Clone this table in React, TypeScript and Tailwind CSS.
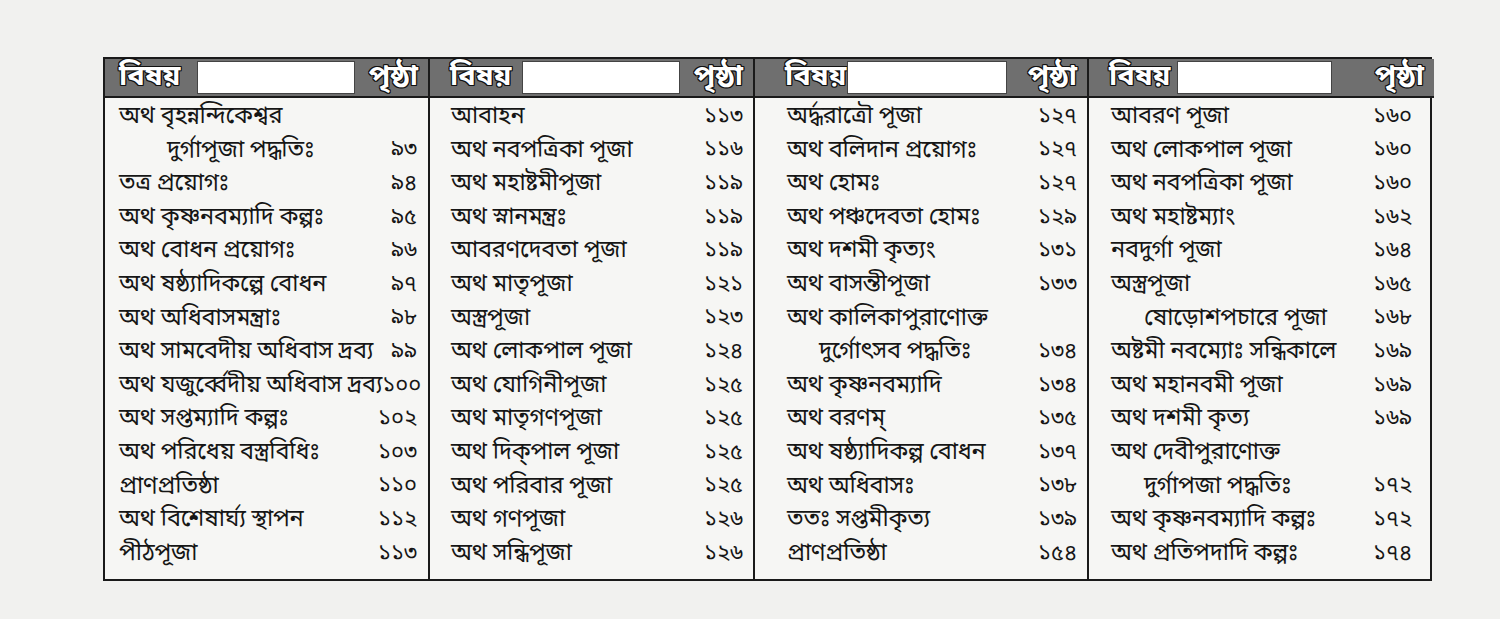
import React from "react";

type Row = { t: string; p?: string; indent?: boolean };

const col1: Row[] = [
  { t: "অথ বৃহন্নন্দিকেশ্বর" },
  { t: "দুর্গাপূজা পদ্ধতিঃ", p: "৯৩", indent: true },
  { t: "তত্র প্রয়োগঃ", p: "৯৪" },
  { t: "অথ কৃষ্ণনবম্যাদি কল্পঃ", p: "৯৫" },
  { t: "অথ বোধন প্রয়োগঃ", p: "৯৬" },
  { t: "অথ ষষ্ঠ্যাদিকল্পে বোধন", p: "৯৭" },
  { t: "অথ অধিবাসমন্ত্রাঃ", p: "৯৮" },
  { t: "অথ সামবেদীয় অধিবাস দ্রব্য", p: "৯৯" },
  { t: "অথ যজুর্ব্বেদীয় অধিবাস দ্রব্য", p: "১০০" },
  { t: "অথ সপ্তম্যাদি কল্পঃ", p: "১০২" },
  { t: "অথ পরিধেয় বস্ত্রবিধিঃ", p: "১০৩" },
  { t: "প্রাণপ্রতিষ্ঠা", p: "১১০" },
  { t: "অথ বিশেষার্ঘ্য স্থাপন", p: "১১২" },
  { t: "পীঠপূজা", p: "১১৩" },
];

const col2: Row[] = [
  { t: "আবাহন", p: "১১৩" },
  { t: "অথ নবপত্রিকা পূজা", p: "১১৬" },
  { t: "অথ মহাষ্টমীপূজা", p: "১১৯" },
  { t: "অথ স্নানমন্ত্রঃ", p: "১১৯" },
  { t: "আবরণদেবতা পূজা", p: "১১৯" },
  { t: "অথ মাতৃপূজা", p: "১২১" },
  { t: "অস্ত্রপূজা", p: "১২৩" },
  { t: "অথ লোকপাল পূজা", p: "১২৪" },
  { t: "অথ যোগিনীপূজা", p: "১২৫" },
  { t: "অথ মাতৃগণপূজা", p: "১২৫" },
  { t: "অথ দিক্‌পাল পূজা", p: "১২৫" },
  { t: "অথ পরিবার পূজা", p: "১২৫" },
  { t: "অথ গণপূজা", p: "১২৬" },
  { t: "অথ সন্ধিপূজা", p: "১২৬" },
];

const col3: Row[] = [
  { t: "অর্দ্ধরাত্রৌ পূজা", p: "১২৭" },
  { t: "অথ বলিদান প্রয়োগঃ", p: "১২৭" },
  { t: "অথ হোমঃ", p: "১২৭" },
  { t: "অথ পঞ্চদেবতা হোমঃ", p: "১২৯" },
  { t: "অথ দশমী কৃত্যং", p: "১৩১" },
  { t: "অথ বাসন্তীপূজা", p: "১৩৩" },
  { t: "অথ কালিকাপুরাণোক্ত" },
  { t: "দুর্গোৎসব পদ্ধতিঃ", p: "১৩৪", indent: true },
  { t: "অথ কৃষ্ণনবম্যাদি", p: "১৩৪" },
  { t: "অথ বরণম্", p: "১৩৫" },
  { t: "অথ ষষ্ঠ্যাদিকল্প বোধন", p: "১৩৭" },
  { t: "অথ অধিবাসঃ", p: "১৩৮" },
  { t: "ততঃ সপ্তমীকৃত্য", p: "১৩৯" },
  { t: "প্রাণপ্রতিষ্ঠা", p: "১৫৪" },
];

const col4: Row[] = [
  { t: "আবরণ পূজা", p: "১৬০" },
  { t: "অথ লোকপাল পূজা", p: "১৬০" },
  { t: "অথ নবপত্রিকা পূজা", p: "১৬০" },
  { t: "অথ মহাষ্টম্যাং", p: "১৬২" },
  { t: "নবদুর্গা পূজা", p: "১৬৪" },
  { t: "অস্ত্রপূজা", p: "১৬৫" },
  { t: "ষোড়োশপচারে পূজা", p: "১৬৮", indent: true },
  { t: "অষ্টমী নবম্যোঃ সন্ধিকালে", p: "১৬৯" },
  { t: "অথ মহানবমী পূজা", p: "১৬৯" },
  { t: "অথ দশমী কৃত্য", p: "১৬৯" },
  { t: "অথ দেবীপুরাণোক্ত" },
  { t: "দুর্গাপজা পদ্ধতিঃ", p: "১৭২", indent: true },
  { t: "অথ কৃষ্ণনবম্যাদি কল্পঃ", p: "১৭২" },
  { t: "অথ প্রতিপদাদি কল্পঃ", p: "১৭৪" },
];

const font =
  "font-['Noto_Sans_Bengali','Noto_Serif_Bengali','Lohit_Bengali','Noto_Sans','DejaVu_Sans',sans-serif]";

const outlined =
  "text-[29px] font-bold leading-none text-white [text-shadow:1px_1px_0_#111,-1px_-1px_0_#111,1px_-1px_0_#111,-1px_1px_0_#111,0_1px_0_#111,0_-1px_0_#111,1px_0_0_#111,-1px_0_0_#111]";

function Header({ labelPad, boxW }: { labelPad: string; boxW: string }) {
  return (
    <div className="flex h-[39px] items-center bg-[#6f6f6f] border-b-[2px] border-[#1a1a1a]">
      <div className={`flex h-[33px] items-center ${labelPad}`}>
        <span className={outlined}>বিষয়</span>
      </div>
      <div className={`h-[33px] ${boxW} bg-white border border-[#444]`} />
      <div className="flex flex-1 justify-end pr-[10px]">
        <span className={outlined}>পৃষ্ঠা</span>
      </div>
    </div>
  );
}

function Column({
  rows,
  padL,
  indentL,
  padR,
  labelPad,
  boxW,
  last,
}: {
  rows: Row[];
  padL: string;
  indentL: string;
  padR: string;
  labelPad: string;
  boxW: string;
  last?: boolean;
}) {
  return (
    <div className={`flex min-w-0 flex-col ${last ? "" : "border-r-[2px] border-[#1a1a1a]"}`}>
      <Header labelPad={labelPad} boxW={boxW} />
      <div className="flex flex-col pt-[3px] pb-[8px]">
        {rows.map((r, i) => (
          <div
            key={i}
            className={`flex h-[33.6px] items-center justify-between ${padR} ${r.indent ? indentL : padL}`}
          >
            <span className="whitespace-nowrap text-[23.5px] leading-none tracking-[-0.2px] text-[#161616]">{r.t}</span>
            <span className="whitespace-nowrap text-[22px] leading-none text-[#161616]">{r.p ?? ""}</span>
          </div>
        ))}
      </div>
    </div>
  );
}

export default function App() {
  return (
    <div className={`min-h-[619px] w-[1500px] bg-[#f1f1ef] pl-[103px] pt-[57px] ${font}`}>
      <div className="grid w-[1329px] grid-cols-[325px_325px_334px_345px] border-[2px] border-[#1a1a1a] bg-[#f6f6f4]">
        <Column rows={col1} padL="pl-[14px]" indentL="pl-[62px]" padR="pr-[11px]" labelPad="pl-[14px] pr-[4px] w-[92px]" boxW="w-[158px]" />
        <Column rows={col2} padL="pl-[21px]" indentL="pl-[60px]" padR="pr-[10px]" labelPad="pl-[20px] pr-[4px] w-[92px]" boxW="w-[158px]" />
        <Column rows={col3} padL="pl-[32px]" indentL="pl-[64px]" padR="pr-[10px]" labelPad="pl-[30px] pr-[4px] w-[92px]" boxW="w-[160px]" />
        <Column rows={col4} padL="pl-[22px]" indentL="pl-[55px]" padR="pr-[22px]" labelPad="pl-[20px] pr-[4px] w-[88px]" boxW="w-[155px]" last />
      </div>
    </div>
  );
}
